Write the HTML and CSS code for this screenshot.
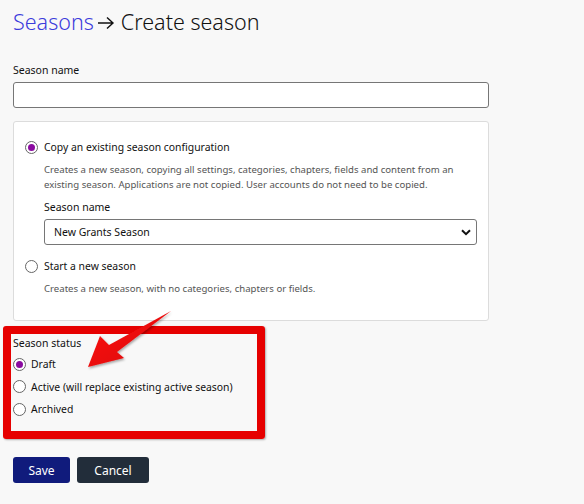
FILE: index.html
```html
<!DOCTYPE html>
<html>
<head>
<meta charset="utf-8">
<link rel="stylesheet" href="styles.css">
</head>
<body>
<h1 class="title"><a class="crumb">Seasons</a><svg class="sep" width="24" height="14" viewBox="0 0 24 14"><path d="M4 7 H19 M13 1.5 L19 7 L13 12.5" fill="none" stroke="#111" stroke-width="1.4"/></svg>Create season</h1>
<div class="field">
  <label class="label">Season name</label>
  <input class="text-input" type="text">
</div>
<div class="card">
  <div class="option">
    <label class="radio-row"><span class="radio checked"></span><span class="radio-label">Copy an existing season configuration</span></label>
    <p class="desc">Creates a new season, copying all settings, categories, chapters, fields and content from an existing season. Applications are not copied. User accounts do not need to be copied.</p>
    <div class="sub-field">
      <label class="label">Season name</label>
      <div class="select"><span>New Grants Season</span>
        <svg class="chev" width="10" height="7" viewBox="0 0 10 7"><path d="M1 1.2 L5 5.2 L9 1.2" fill="none" stroke="#111" stroke-width="2"/></svg>
      </div>
    </div>
  </div>
  <div class="option">
    <label class="radio-row"><span class="radio"></span><span class="radio-label">Start a new season</span></label>
    <p class="desc">Creates a new season, with no categories, chapters or fields.</p>
  </div>
</div>
<div class="status-box">
  <div class="label status-label">Season status</div>
  <label class="radio-row small"><span class="radio checked"></span><span class="radio-label">Draft</span></label>
  <label class="radio-row small"><span class="radio"></span><span class="radio-label">Active (will replace existing active season)</span></label>
  <label class="radio-row small"><span class="radio"></span><span class="radio-label">Archived</span></label>
</div>
<div class="actions">
  <button class="btn btn-save">Save</button>
  <button class="btn btn-cancel">Cancel</button>
</div>
<svg class="arrow" width="584" height="504" viewBox="0 0 584 504">
  <defs>
    <linearGradient id="ag" x1="0" y1="0" x2="1" y2="1">
      <stop offset="0" stop-color="#ff1a1a"/>
      <stop offset="1" stop-color="#d80000"/>
    </linearGradient>
    <filter id="sh" x="-20%" y="-20%" width="140%" height="140%">
      <feDropShadow dx="1" dy="1.5" stdDeviation="1" flood-color="#000" flood-opacity="0.35"/>
    </filter>
  </defs>
  <polygon points="88,367 100,336 109,345 171,311 117,352 124,358" fill="url(#ag)" filter="url(#sh)"/>
</svg>
</body>
</html>
```
FILE: styles.css
```css
html, body {
  margin: 0;
  padding: 0;
}
body {
  background: #f8f8f8;
  font-family: "Noto Sans", sans-serif;
  color: #1a1a1a;
  width: 584px;
  height: 504px;
  padding: 0 13px;
  box-sizing: border-box;
  position: relative;
  overflow: hidden;
}
.title {
  margin: 0;
  padding-top: 6px;
  font-size: 21.5px;
  font-weight: 300;
  line-height: 32px;
  height: 32px;
  color: #111;
  display: flex;
  align-items: center;
}
.crumb {
  color: #3c3cdc;
}
.sep {
  display: block;
  flex: none;
  margin: 1px 3px 0 0;
}
.field {
  margin-top: 25px;
  width: 476px;
}
.label {
  display: block;
  font-size: 10.5px;
  line-height: 14px;
  color: #111;
  margin-bottom: 5px;
}
.text-input {
  display: block;
  width: 476px;
  height: 26px;
  box-sizing: border-box;
  border: 1px solid #767676;
  border-radius: 3px;
  background: #fff;
  margin: 0;
}
.card {
  margin-top: 13px;
  width: 476px;
  box-sizing: border-box;
  background: #fff;
  border: 1px solid #dcdcdc;
  border-radius: 3px;
  padding: 17px 11px 24px 11px;
}
.option + .option {
  margin-top: 13px;
}
.radio-row {
  display: flex;
  align-items: center;
  gap: 6px;
  font-size: 10.4px;
  line-height: 16px;
  color: #111;
}
.radio {
  width: 11px;
  height: 11px;
  border: 1px solid #666;
  border-radius: 50%;
  background: #fff;
  position: relative;
  flex: none;
}
.radio.checked::after {
  content: "";
  position: absolute;
  left: 2px;
  top: 2px;
  width: 7px;
  height: 7px;
  border-radius: 50%;
  background: #8a0aa0;
}
.desc {
  margin: 7px 0 0 19px;
  font-size: 9.6px;
  line-height: 15px;
  color: #555;
}
.sub-field {
  margin: 8px 0 0 19px;
}
.sub-field .label {
  margin-bottom: 5px;
}
.select {
  height: 26px;
  box-sizing: border-box;
  border: 1px solid #767676;
  border-radius: 3px;
  background: #fff;
  display: flex;
  align-items: center;
  justify-content: space-between;
  padding: 0 5px 0 9px;
  font-size: 10.5px;
  color: #111;
}
.status-box {
  margin: 5px 0 0 -10px;
  width: 262px;
  height: 113px;
  box-sizing: border-box;
  border: 8px solid #e60000;
  border-radius: 3px;
  padding: 2px 2px 0 2px;
  box-shadow: 1px 1px 2px rgba(0,0,0,0.3);
}
.status-label {
  margin-bottom: 6px;
}
.radio-row.small {
  gap: 5px;
  height: 16px;
  margin-bottom: 6.5px;
}
.actions {
  margin-top: 18px;
  display: flex;
  gap: 7px;
}
.btn {
  border: none;
  border-radius: 3px;
  height: 26px;
  color: #fff;
  font-family: "Noto Sans", sans-serif;
  font-size: 12px;
  padding: 0;
}
.btn-save {
  width: 57px;
  background: #101b7c;
}
.btn-cancel {
  width: 72px;
  background: #222d3a;
}
.arrow {
  position: absolute;
  left: 0;
  top: 0;
  pointer-events: none;
}
```
